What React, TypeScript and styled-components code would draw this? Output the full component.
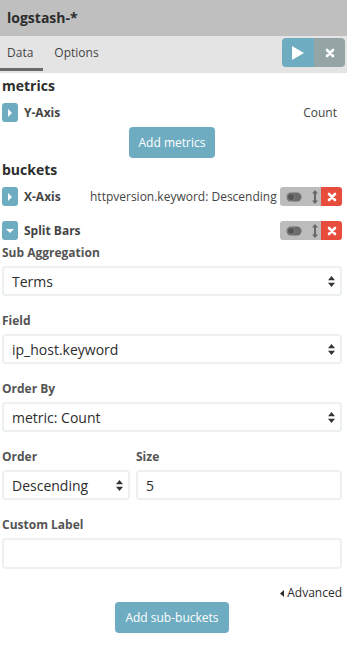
import React from "react";
import styled, { createGlobalStyle } from "styled-components";

const Global = createGlobalStyle`
  html, body {
    margin: 0;
    padding: 0;
    background: #ffffff;
  }
  body {
    font-family: "Open Sans", "Liberation Sans", sans-serif;
    color: #2d2d2d;
  }
  * {
    box-sizing: border-box;
  }
`;

const BLUE = "#6eadc1";
const RED = "#e74c3c";

const Panel = styled.div`
  width: 347px;
  display: flex;
  flex-direction: column;
`;

const Header = styled.div`
  height: 36px;
  background: #bfbfbf;
  display: flex;
  align-items: center;
  padding: 0 7px 2px;
  font-size: 14px;
  font-weight: 700;
  color: #2d2d2d;
`;

const TabBar = styled.div`
  height: 37px;
  background: #e4e4e4;
  display: flex;
  align-items: flex-start;
  padding-bottom: 2px;
`;

const Tab = styled.div<{ $active?: boolean }>`
  height: 35px;
  padding: 1px 10px 0 7px;
  display: flex;
  align-items: center;
  font-size: 12px;
  color: #444;
  border-bottom: 3px solid ${(p) => (p.$active ? "#6a6a6a" : "transparent")};
  & + & {
    padding-left: 11px;
  }
`;

const TabSpacer = styled.div`
  flex: 1;
`;

const ActionGroup = styled.div`
  display: flex;
  margin: 2px 2px 0 0;
  border-radius: 4px;
  overflow: hidden;
  height: 29px;
`;

const ActionButton = styled.div<{ $color: string; $width: number }>`
  width: ${(p) => p.$width}px;
  background: ${(p) => p.$color};
  display: flex;
  align-items: center;
  justify-content: center;
`;

const Body = styled.div`
  display: flex;
  flex-direction: column;
  padding: 0 5px 0 2px;
`;

const SectionTitle = styled.div<{ $top: number }>`
  font-size: 14px;
  font-weight: 700;
  color: #2d2d2d;
  margin-top: ${(p) => p.$top}px;
  line-height: 22px;
`;

const AggRow = styled.div<{ $top: number }>`
  display: flex;
  align-items: center;
  height: 19px;
  margin-top: ${(p) => p.$top}px;
`;

const Caret = styled.div`
  width: 16px;
  height: 19px;
  border-radius: 3px;
  background: ${BLUE};
  display: flex;
  align-items: center;
  justify-content: center;
  flex-shrink: 0;
`;

const AggName = styled.div<{ $width?: number }>`
  font-size: 12px;
  font-weight: 700;
  color: #444;
  margin-left: 6px;
  width: ${(p) => (p.$width ? `${p.$width}px` : "auto")};
`;

const AggDesc = styled.div<{ $right?: boolean }>`
  flex: 1;
  font-size: 12px;
  color: #444;
  text-align: ${(p) => (p.$right ? "right" : "left")};
  padding-right: ${(p) => (p.$right ? "5px" : "0")};
  white-space: nowrap;
  overflow: hidden;
`;

const Controls = styled.div`
  display: flex;
  height: 19px;
  border-radius: 3px;
  overflow: hidden;
  margin-left: auto;
  flex-shrink: 0;
`;

const ControlPart = styled.div<{ $color: string; $width: number }>`
  width: ${(p) => p.$width}px;
  background: ${(p) => p.$color};
  display: flex;
  align-items: center;
  justify-content: center;
`;

const PrimaryButton = styled.div<{ $top: number; $width: number }>`
  align-self: center;
  margin-top: ${(p) => p.$top}px;
  width: ${(p) => p.$width}px;
  height: 31px;
  border-radius: 4px;
  background: ${BLUE};
  color: #ffffff;
  font-size: 12px;
  display: flex;
  align-items: center;
  justify-content: center;
`;

const Label = styled.div<{ $top: number }>`
  font-size: 12px;
  font-weight: 700;
  color: #545454;
  margin-top: ${(p) => p.$top}px;
  line-height: 18px;
`;

const Field = styled.div<{ $height?: number }>`
  height: ${(p) => p.$height ?? 30}px;
  margin-top: 4px;
  border: 2px solid #ecf0f1;
  border-radius: 4px;
  background: #ffffff;
  display: flex;
  align-items: center;
  padding: 0 5px 0 8px;
  font-size: 14px;
  color: #2d2d2d;
`;

const FieldText = styled.span`
  flex: 1;
`;

const Columns = styled.div`
  display: grid;
  grid-template-columns: 128px 1fr;
  column-gap: 6px;
  margin-top: 16px;
`;

const Column = styled.div`
  display: flex;
  flex-direction: column;
`;

const AdvancedLink = styled.div`
  margin-top: 16px;
  align-self: flex-end;
  display: flex;
  align-items: center;
  gap: 3px;
  font-size: 12px;
  color: #2d2d2d;
  line-height: 16px;
`;

const SortArrows = () => (
  <svg width="7" height="11" viewBox="0 0 7 11">
    <path d="M3.5 0 L7 4.2 L0 4.2 Z" fill="#333" />
    <path d="M3.5 11 L7 6.8 L0 6.8 Z" fill="#333" />
  </svg>
);

const Select = ({ value }: { value: string }) => (
  <Field>
    <FieldText>{value}</FieldText>
    <SortArrows />
  </Field>
);

const CaretRight = () => (
  <svg width="6" height="8" viewBox="0 0 6 8">
    <path d="M1 0 L5 4 L1 8 Z" fill="#ffffff" />
  </svg>
);

const CaretDown = () => (
  <svg width="8" height="6" viewBox="0 0 8 6">
    <path d="M0 1 L8 1 L4 5 Z" fill="#ffffff" />
  </svg>
);

const Cross = ({ size }: { size: number }) => (
  <svg width={size} height={size} viewBox="0 0 10 10">
    <path d="M2 2 L8 8 M8 2 L2 8" stroke="#ffffff" strokeWidth="2.6" strokeLinecap="round" />
  </svg>
);

const Play = () => (
  <svg width="12" height="14" viewBox="0 0 12 14">
    <path d="M0 0 L12 7 L0 14 Z" fill="#ffffff" />
  </svg>
);

const ToggleIcon = () => (
  <svg width="16" height="10" viewBox="0 0 16 10">
    <rect x="0.5" y="0.5" width="15" height="9" rx="4.5" fill="#6c6c6c" />
    <circle cx="5" cy="5" r="3.6" fill="#555" stroke="#8a8a8a" strokeWidth="0.8" />
  </svg>
);

const MoveIcon = () => (
  <svg width="6" height="14" viewBox="0 0 6 14">
    <path d="M3 0 L6 3.5 L4 3.5 L4 10.5 L6 10.5 L3 14 L0 10.5 L2 10.5 L2 3.5 L0 3.5 Z" fill="#666" />
  </svg>
);

const RowControls = () => (
  <Controls>
    <ControlPart $color="#bcbcbc" $width={28}>
      <ToggleIcon />
    </ControlPart>
    <ControlPart $color="#bcbcbc" $width={13}>
      <MoveIcon />
    </ControlPart>
    <ControlPart $color={RED} $width={21}>
      <Cross size={10} />
    </ControlPart>
  </Controls>
);

export default function App() {
  return (
    <Panel>
      <Global />
      <Header>logstash-*</Header>
      <TabBar>
        <Tab $active>Data</Tab>
        <Tab>Options</Tab>
        <TabSpacer />
        <ActionGroup>
          <ActionButton $color={BLUE} $width={32}>
            <Play />
          </ActionButton>
          <ActionButton $color="#95a5a6" $width={31}>
            <Cross size={10} />
          </ActionButton>
        </ActionGroup>
      </TabBar>
      <Body>
        <SectionTitle $top={2}>metrics</SectionTitle>
        <AggRow $top={6}>
          <Caret>
            <CaretRight />
          </Caret>
          <AggName>Y-Axis</AggName>
          <AggDesc $right>Count</AggDesc>
        </AggRow>
        <PrimaryButton $top={5} $width={86}>
          Add metrics
        </PrimaryButton>
        <SectionTitle $top={1}>buckets</SectionTitle>
        <AggRow $top={6}>
          <Caret>
            <CaretRight />
          </Caret>
          <AggName $width={66}>X-Axis</AggName>
          <AggDesc>httpversion.keyword: Descending</AggDesc>
          <RowControls />
        </AggRow>
        <AggRow $top={15}>
          <Caret>
            <CaretDown />
          </Caret>
          <AggName>Split Bars</AggName>
          <RowControls />
        </AggRow>
        <Label $top={4}>Sub Aggregation</Label>
        <Select value="Terms" />
        <Label $top={16}>Field</Label>
        <Select value="ip_host.keyword" />
        <Label $top={16}>Order By</Label>
        <Select value="metric: Count" />
        <Columns>
          <Column>
            <Label $top={0}>Order</Label>
            <Select value="Descending" />
          </Column>
          <Column>
            <Label $top={0}>Size</Label>
            <Field>5</Field>
          </Column>
        </Columns>
        <Label $top={16}>Custom Label</Label>
        <Field $height={31} />
        <AdvancedLink>
          <svg width="4" height="7" viewBox="0 0 4 7">
            <path d="M4 0 L0 3.5 L4 7 Z" fill="#2d2d2d" />
          </svg>
          Advanced
        </AdvancedLink>
        <PrimaryButton $top={1} $width={114}>
          Add sub-buckets
        </PrimaryButton>
      </Body>
    </Panel>
  );
}
